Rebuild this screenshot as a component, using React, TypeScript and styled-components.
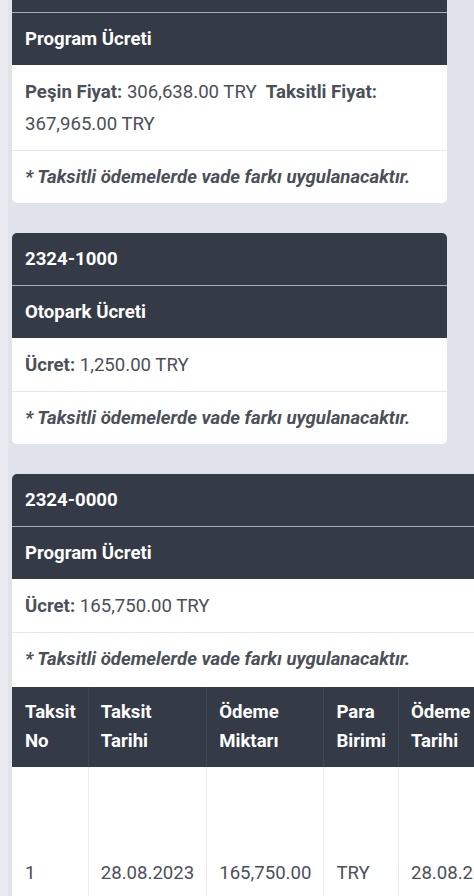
import React from 'react';
import styled, { createGlobalStyle } from 'styled-components'

const GlobalStyle = createGlobalStyle`
  html, body {
    margin: 0;
    padding: 0;
    background: #e1e3ea;
    font-family: Roboto, "Liberation Sans", Arial, sans-serif;
    overflow: hidden;
  }
`

type Fee = {
  code: string
  title: string
  prices: { label: string, value: string }[]
  installments?: string[][]
}

const fees: Fee[] = [
  {
    code: '2324-2000',
    title: 'Program Ücreti',
    prices: [
      { label: 'Peşin Fiyat:', value: '306,638.00 TRY' },
      { label: 'Taksitli Fiyat:', value: '367,965.00 TRY' },
    ],
  },
  {
    code: '2324-1000',
    title: 'Otopark Ücreti',
    prices: [{ label: 'Ücret:', value: '1,250.00 TRY' }],
  },
  {
    code: '2324-0000',
    title: 'Program Ücreti',
    prices: [{ label: 'Ücret:', value: '165,750.00 TRY' }],
    installments: [
      ['1', '28.08.2023', '165,750.00', 'TRY', '28.08.2023', 'Ödendi'],
    ],
  },
]

const tableHeaders = [
  ['Taksit', 'No'],
  ['Taksit', 'Tarihi'],
  ['Ödeme', 'Miktarı'],
  ['Para', 'Birimi'],
  ['Ödeme', 'Tarihi'],
  ['Ödeme', 'Durumu'],
]

const App = () => {
  return (
    <>
      <GlobalStyle />
      <Page>
        {
          fees.map((fee) => (
            <Card key={fee.code} wide={!!fee.installments}>
              <DarkRow>{fee.code}</DarkRow>
              <DarkRow>{fee.title}</DarkRow>
              <BodyRow>
                {
                  fee.prices.map((price, index) => (
                    <React.Fragment key={index}>
                      {index > 0 && '\u00a0 '}
                      <Label>{price.label}</Label> {price.value}
                    </React.Fragment>
                  ))
                }
              </BodyRow>
              <NoteRow>* Taksitli ödemelerde vade farkı uygulanacaktır.</NoteRow>
              {
                fee.installments && (
                  <Table>
                    <thead>
                      <tr>
                        {
                          tableHeaders.map((lines, index) => (
                            <Th key={index}>{lines[0]}<br/>{lines[1]}</Th>
                          ))
                        }
                      </tr>
                    </thead>
                    <tbody>
                      {
                        fee.installments.map((row, index) => (
                          <tr key={index}>
                            {row.map((cell, i) => <Td key={i}>{cell}</Td>)}
                          </tr>
                        ))
                      }
                    </tbody>
                  </Table>
                )
              }
            </Card>
          ))
        }
      </Page>
    </>
  );
};

const Page = styled.div`
  display: flex;
  flex-direction: column;
  align-items: flex-start;
  gap: 30px;
  margin-top: -40px;
  padding: 0 0 40px 4px;
  border-left: 8px solid #eaebf0;
  min-height: 1000px;
`

const Card = styled.div<{ wide?: boolean }>`
  width: ${props => props.wide ? 'max-content' : '435px'};
  min-width: 435px;
  background: #ffffff;
  border-radius: 5px;
  overflow: hidden;
  color: #4b5058;
  font-size: 18.6px;
`

const DarkRow = styled.div`
  background: #343a46;
  color: #ffffff;
  font-weight: 700;
  line-height: 30px;
  padding: 11px 13px 11px 13px;
  border-bottom: 1px solid #a9adb5;
  &:nth-child(2) {
    border-bottom: none;
  }
`

const BodyRow = styled.div`
  padding: 11px 13px 10px;
  line-height: 32px;
  border-bottom: 1px solid #e6e7eb;
`

const Label = styled.span`
  font-weight: 700;
`

const NoteRow = styled.div`
  padding: 11px 13px 11px;
  line-height: 30px;
  font-style: italic;
  font-weight: 700;
`

const Table = styled.table`
  border-collapse: collapse;
  border-top: 2px solid #ffffff;
`

const Th = styled.th`
  background: #343a46;
  color: #ffffff;
  font-weight: 700;
  text-align: left;
  white-space: nowrap;
  line-height: 29px;
  padding: 11px 12px 11px 12px;
  border-left: 1px solid #3f4551;
  &:first-child {
    border-left: none;
    padding-left: 13px;
  }
`

const Td = styled.td`
  height: 212px;
  padding: 0 12px;
  white-space: nowrap;
  font-weight: 400;
  vertical-align: middle;
  border-left: 1px solid #ececef;
  &:first-child {
    border-left: none;
    padding-left: 13px;
  }
`

export default App
